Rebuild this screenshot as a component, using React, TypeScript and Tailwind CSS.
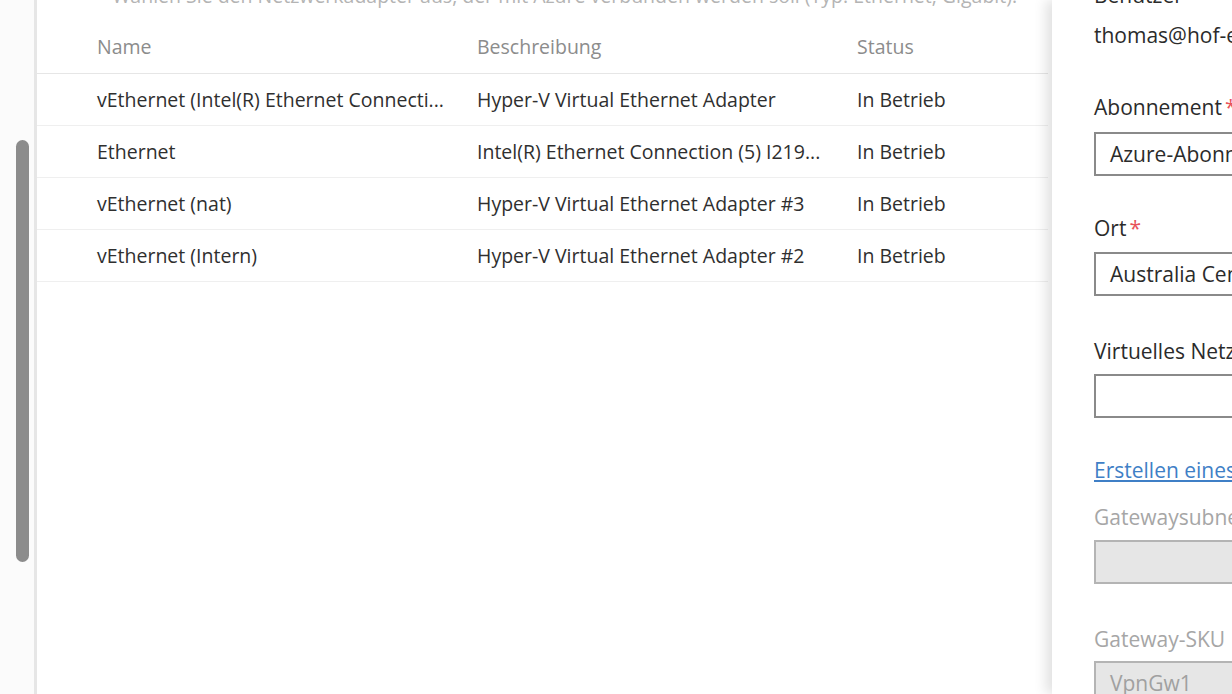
import React from 'react';

type Adapter = { name: string; description: string; status: string };

const adapters: Adapter[] = [
  { name: 'vEthernet (Intel(R) Ethernet Connecti...', description: 'Hyper-V Virtual Ethernet Adapter', status: 'In Betrieb' },
  { name: 'Ethernet', description: 'Intel(R) Ethernet Connection (5) I219...', status: 'In Betrieb' },
  { name: 'vEthernet (nat)', description: 'Hyper-V Virtual Ethernet Adapter #3', status: 'In Betrieb' },
  { name: 'vEthernet (Intern)', description: 'Hyper-V Virtual Ethernet Adapter #2', status: 'In Betrieb' },
];

const Label: React.FC<{ text: string; required?: boolean; disabled?: boolean; className?: string }> = ({
  text,
  required,
  disabled,
  className = '',
}) => (
  <div className={`h-[26px] leading-[26px] whitespace-nowrap ${disabled ? 'text-[#a6a6a6]' : 'text-[#2b2b2b]'} ${className}`}>
    {text}
    {required && <span className="ml-[3px] text-[#e8535a]">*</span>}
  </div>
);

const Field: React.FC<{ value?: string; disabled?: boolean; className?: string }> = ({ value, disabled, className = '' }) => (
  <div
    className={`h-[44px] w-[220px] border-2 px-[14px] leading-[40px] whitespace-nowrap ${
      disabled ? 'border-[#b4b4b4] bg-[#e6e6e6] text-[#a0a0a0]' : 'border-[#8a8a8a] bg-white text-[#2b2b2b]'
    } ${className}`}
  >
    {value}
  </div>
);

export default function App() {
  return (
    <div className="flex h-[694px] w-[1232px] overflow-hidden bg-white font-['Open_Sans',sans-serif]">
      {/* left scroll gutter */}
      <div className="w-[37px] shrink-0 border-r-[3px] border-[#e6e6e6] bg-[#fbfbfb] pl-[16px] pt-[140px]">
        <div className="h-[422px] w-[13px] rounded-full bg-[#8c8c8c]" />
      </div>

      {/* adapter table */}
      <main className="min-w-0 flex-1 pr-[4px] text-[19.5px]">
        <div className="h-[20px] overflow-hidden pl-[60px]">
          <div className="-mt-[19px] flex items-center gap-[8px] whitespace-nowrap text-[#b4b4b4]">
            <span className="text-[#5b8fd0]">•</span>
            <span>Wählen Sie den Netzwerkadapter aus, der mit Azure verbunden werden soll (Typ: Ethernet, Gigabit).</span>
          </div>
        </div>
        <div className="flex h-[54px] items-center border-b border-[#e6e6e6] pl-[60px] text-[#8c8c8c]">
          <div className="w-[380px]">Name</div>
          <div className="w-[380px]">Beschreibung</div>
          <div>Status</div>
        </div>
        {adapters.map((a) => (
          <div key={a.name} className="flex h-[52px] items-center border-b border-[#efefef] pl-[60px] text-[#2f2f2f]">
            <div className="w-[380px] whitespace-nowrap">{a.name}</div>
            <div className="w-[380px] whitespace-nowrap">{a.description}</div>
            <div className="whitespace-nowrap">{a.status}</div>
          </div>
        ))}
      </main>

      {/* connect-to-azure side panel */}
      <aside className="w-[180px] shrink-0 overflow-hidden bg-white pl-[42px] text-[21px] shadow-[-6px_0_12px_rgba(0,0,0,0.12)]">
        <div className="h-[8px] overflow-hidden">
          <div className="-mt-[18px] leading-[26px] text-[#2b2b2b]">Benutzer</div>
        </div>
        <div className="mt-[14px] h-[26px] leading-[26px] whitespace-nowrap text-[#2b2b2b]">thomas@hof-erbach.de</div>
        <Label text="Abonnement" required className="mt-[46px]" />
        <Field value="Azure-Abonnement 1" className="mt-[12px]" />
        <Label text="Ort" required className="mt-[39px]" />
        <Field value="Australia Central" className="mt-[11px]" />
        <Label text="Virtuelles Netzwerk" className="mt-[42px]" />
        <Field className="mt-[10px]" />
        <div className="mt-[39px] h-[26px] leading-[26px] whitespace-nowrap text-[#3f7fc6] underline">
          Erstellen eines virtuellen Netzwerks
        </div>
        <Label text="Gatewaysubnetz" disabled className="mt-[21px]" />
        <Field disabled className="mt-[10px]" />
        <Label text="Gateway-SKU" disabled className="mt-[42px]" />
        <Field value="VpnGw1" disabled className="mt-[9px]" />
      </aside>
    </div>
  );
}
